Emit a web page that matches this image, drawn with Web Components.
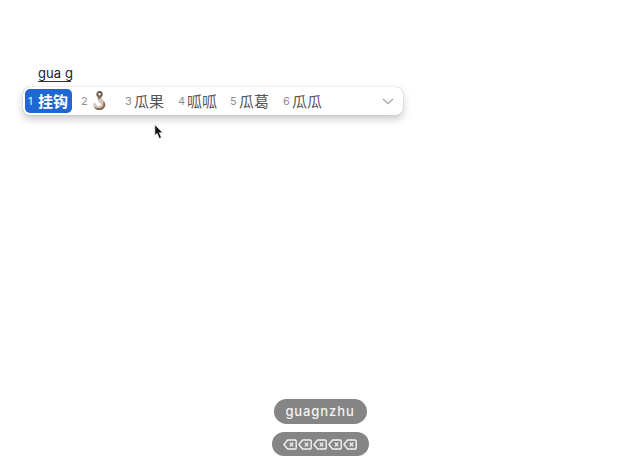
<!DOCTYPE html>
<html>
<head>
<meta charset="utf-8">
<style>
html, body { margin: 0; height: 100%; background: #fff; }
body { font-family: "Noto Sans", "Noto Sans CJK SC", sans-serif; overflow: hidden; }
</style>
</head>
<body>
<ime-demo>
	<ime-panel slot="panel" preedit="gua g">
		<ime-candidate num="1" selected>挂钩</ime-candidate>
		<ime-candidate num="2" style="margin-left:6px;width:37px"><hook-icon></hook-icon></ime-candidate>
		<ime-candidate num="3" style="margin-left:7px">瓜果</ime-candidate>
		<ime-candidate num="4" style="margin-left:7px">呱呱</ime-candidate>
		<ime-candidate num="5" style="margin-left:6px">瓜葛</ime-candidate>
		<ime-candidate num="6" style="margin-left:7px">瓜瓜</ime-candidate>
	</ime-panel>
	<key-pill slot="keys" style="width:93px;height:25px">guagnzhu</key-pill>
	<key-pill slot="keys" style="width:97px;height:24px">
		<delete-key></delete-key><delete-key></delete-key><delete-key></delete-key><delete-key></delete-key><delete-key></delete-key>
	</key-pill>
</ime-demo>

<script>
class ImeDemo extends HTMLElement
{
	constructor() {
		super();
		this.attachShadow({mode: 'open'}).innerHTML = `
			<style>
				:host {
					display: flex;
					flex-direction: column;
					justify-content: space-between;
					position: relative;
					height: 475px;
					box-sizing: border-box;
					padding: 65px 0 19px 23px;
				}
				#keys {
					display: flex;
					flex-direction: column;
					align-items: center;
					gap: 8px;
					margin-left: -23px;
				}
				#cursor {
					position: absolute;
					left: 154px;
					top: 124px;
				}
			</style>
			<div><slot name="panel"></slot></div>
			<div id="keys"><slot name="keys"></slot></div>
			<svg id="cursor" width="10" height="16" viewBox="0 0 10 16">
				<path d="M.8.6V11.6L3.2 9.4 5.2 14.6 7.4 13.6 5.4 8.8H8.8Z" fill="#111" stroke="#fff" stroke-width=".7"/>
			</svg>
		`;
	}
}

class ImePanel extends HTMLElement
{
	constructor() {
		super();
		this.attachShadow({mode: 'open'}).innerHTML = `
			<style>
				:host { display: block; width: 380px; }
				#preedit {
					display: block;
					width: 33px;
					margin-left: 15px;
					font: 13px/16px "Inter", "Noto Sans", sans-serif;
					letter-spacing: .1px;
					color: #222;
					border-bottom: 1.5px solid #333;
					white-space: pre;
				}
				#bar {
					display: flex;
					align-items: center;
					height: 28px;
					margin-top: 5px;
					box-sizing: border-box;
					padding: 0 2px;
					background: #fff;
					border-radius: 7px;
					box-shadow: 0 0 1px rgba(0,0,0,.35), 0 4px 9px rgba(0,0,0,.22);
				}
				#chevron { display: block; margin-left: auto; margin-right: 7px; }
			</style>
			<div id="preedit"></div>
			<div id="bar">
				<slot></slot>
				<svg id="chevron" width="12" height="7" viewBox="0 0 12 7">
					<path d="M1 1 6 5.6 11 1" fill="none" stroke="#aaa" stroke-width="1.3"/>
				</svg>
			</div>
		`;
		this.shadowRoot.getElementById('preedit').textContent = this.getAttribute('preedit');
	}
}

class ImeCandidate extends HTMLElement
{
	constructor() {
		super();
		this.attachShadow({mode: 'open'}).innerHTML = `
			<style>
				:host {
					display: flex;
					align-items: center;
					height: 24px;
					padding: 0 4px 0 3px;
					gap: 2px;
					box-sizing: border-box;
					border-radius: 5px;
					color: #555;
					font: 15px/24px "Noto Sans CJK SC", sans-serif;
				}
				:host([selected]) {
					background: #1f67d2;
					color: #fff;
					font-weight: 700;
				}
				#num { width: 7px; font: 11px/24px "Inter", sans-serif; color: #8f8f8f; }
				:host([selected]) #num { width: 8px; color: #e8f0ff; }
			</style>
			<span id="num"></span><slot></slot>
		`;
		this.shadowRoot.getElementById('num').textContent = this.getAttribute('num');
	}
}

class HookIcon extends HTMLElement
{
	constructor() {
		super();
		this.attachShadow({mode: 'open'}).innerHTML = `
			<style>:host { display: block; width: 15px; height: 20px; margin-left: 2px; }
			svg { display: block; }</style>
			<svg width="15" height="20" viewBox="0 0 15 20">
				<circle cx="7.5" cy="3.2" r="2.2" fill="none" stroke="#6f5748" stroke-width="1.9"/>
				<path d="M5.8 5.4H9.2V9H5.8Z" fill="#8a7060"/>
				<path d="M9 7.6C12 9 13.8 11.4 13.3 14.2 12.7 17.8 9 19.6 5.8 18.9 2.8 18.2 .9 15.6 1.4 12.4L2.6 11.6 5 14.2C5.6 15.2 7 15.4 8 14.8 9.2 14 9 12.4 7.8 11.6 6.4 10.8 5.6 9.6 5.8 8Z" fill="#d3c4b4"/>
				<path d="M13.3 14.2C12.7 17.8 9 19.6 5.8 18.9 4 18.5 2.6 17.4 1.9 15.8 4.4 17.6 8.4 17.8 10.4 15.8 11.6 14.6 11.8 12.6 11 10.4 12.6 11.4 13.6 12.6 13.3 14.2Z" fill="#87664f"/>
			</svg>
		`;
	}
}

class KeyPill extends HTMLElement
{
	constructor() {
		super();
		this.attachShadow({mode: 'open'}).innerHTML = `
			<style>
				:host {
					display: flex;
					align-items: center;
					justify-content: center;
					gap: 1px;
					border-radius: 13px;
					background: #858585;
					color: #f4f4f4;
					font: 500 13px/25px "Inter", "Noto Sans", sans-serif;
					letter-spacing: .9px;
				}
			</style>
			<slot></slot>
		`;
	}
}

class DeleteKey extends HTMLElement
{
	constructor() {
		super();
		this.attachShadow({mode: 'open'}).innerHTML = `
			<style>:host { display: block; width: 14px; height: 11px; }
			svg { display: block; }</style>
			<svg width="14" height="11" viewBox="0 0 14 11">
				<path d="M4.6 1H12A1.2 1.2 0 0 1 13.2 2.2V8.8A1.2 1.2 0 0 1 12 10H4.6L.9 5.5Z" fill="none" stroke="#f2f2f2" stroke-width="1.4" stroke-linejoin="round"/>
				<path d="M6.8 3.6 10.2 7.4M10.2 3.6 6.8 7.4" stroke="#f2f2f2" stroke-width="1.4"/>
			</svg>
		`;
	}
}

customElements.define('ime-demo', ImeDemo);
customElements.define('ime-panel', ImePanel);
customElements.define('ime-candidate', ImeCandidate);
customElements.define('hook-icon', HookIcon);
customElements.define('key-pill', KeyPill);
customElements.define('delete-key', DeleteKey);
</script>
</body>
</html>
